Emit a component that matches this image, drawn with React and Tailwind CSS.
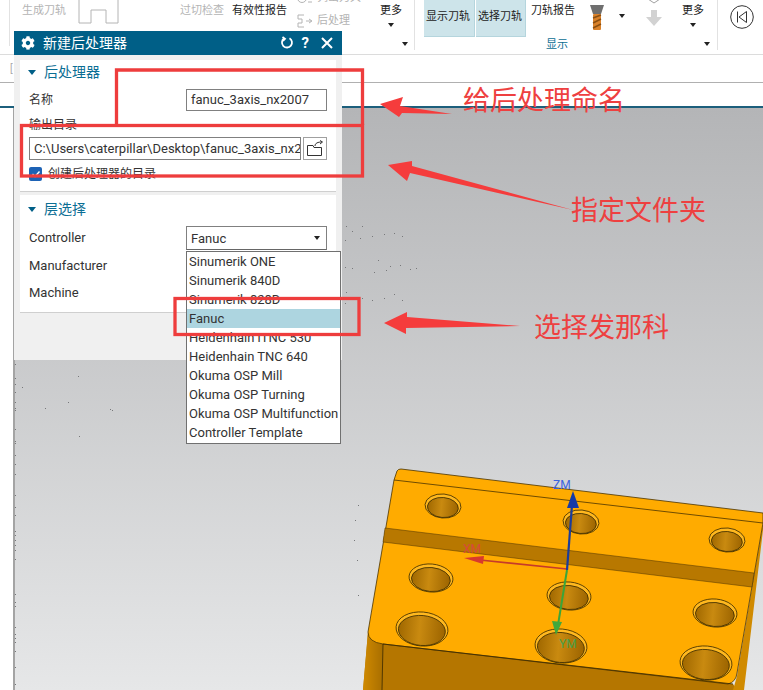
import React from "react";
import { FaCog } from "react-icons/fa";

const UI = "font-['Roboto','Noto_Sans_CJK_SC',sans-serif]";

const holes = [
  [443, 506, 18, 12], [581, 522, 18, 12], [727, 540, 18, 12],
  [431, 578, 22, 14], [569, 596, 22, 14], [715, 613, 22, 14],
  [422, 629, 26, 17], [561, 646, 26, 17], [706, 663, 26, 17],
];

const dots = [
  [346, 226], [352, 231], [362, 226], [372, 236], [384, 234], [394, 233], [402, 236], [345, 240], [360, 238],
  [345, 267], [352, 268], [378, 260], [390, 266], [400, 265], [410, 269], [416, 268], [374, 272], [386, 270],
  [346, 292], [362, 298], [372, 300], [384, 298], [394, 294], [402, 300], [345, 303],
  [15, 364], [15, 378], [15, 384], [15, 392], [22, 387], [15, 402], [15, 408], [45, 408], [15, 410], [15, 429],
  [15, 441], [15, 443], [15, 455], [15, 464], [15, 474], [15, 495], [15, 507], [15, 515], [15, 531], [15, 535],
  [15, 540], [15, 545], [15, 550], [15, 559], [15, 594], [15, 602], [15, 606], [15, 627], [15, 634], [15, 638],
  [15, 642], [15, 651], [15, 667], [15, 684], [78, 376], [112, 410], [110, 409], [68, 402], [79, 436],
  [358, 505], [355, 520], [354, 540], [357, 560], [358, 595],
];

const menu = [
  "Sinumerik ONE", "Sinumerik 840D", "Sinumerik 828D", "Fanuc", "Heidenhain iTNC 530",
  "Heidenhain TNC 640", "Okuma OSP Mill", "Okuma OSP Turning", "Okuma OSP Multifunction", "Controller Template",
];

function Caret({ className = "" }) {
  return <span className={`block w-0 h-0 border-x-[3.5px] border-x-transparent border-t-[4px] border-t-[#222] ${className}`} />;
}

function RibbonText({ children, muted, className = "" }) {
  return (
    <span className={`whitespace-nowrap text-[11px] leading-[14px] ${muted ? "text-[#b4b4b4]" : "text-[#222]"} ${className}`}>
      {children}
    </span>
  );
}

function Model() {
  return (
    <svg className="absolute left-0 top-0 pointer-events-none" width="763" height="690" viewBox="0 0 763 690">
      <defs>
        <linearGradient id="hole" x1="0" x2="1" y1="0" y2="0">
          <stop offset="0" stopColor="#a06800" />
          <stop offset="0.45" stopColor="#c98a10" />
          <stop offset="1" stopColor="#9c6400" />
        </linearGradient>
        <linearGradient id="side" x1="0" x2="1" y1="0" y2="0">
          <stop offset="0" stopColor="#d08a00" />
          <stop offset="1" stopColor="#a86e00" />
        </linearGradient>
      </defs>
      {dots.map(([x, y], i) => (
        <rect key={i} x={x} y={y} width="1" height="1" fill="#77787a" />
      ))}
      <polygon points="368,632 383,644 733,684 737,690 363,690" fill="#b57600" />
      <polygon points="368,632 383,644 382,690 363,690" fill="url(#side)" />
      <polygon points="763,523 763,530 744,690 733,690 737,676" fill="#d08a00" />
      <path
        d="M394,480 L397,471 Q398,469 401,469 L763,513 L763,523 L737,673 Q736,682 728,684 L383,644 Q368,642 368,632 Z"
        fill="#ffab00"
        stroke="#4a3300"
        strokeWidth="0.8"
      />
      <path d="M394,480 L763,523" stroke="#4a3300" strokeWidth="0.8" fill="none" />
      <polygon points="385,528 754,573 752,587 383,542" fill="#b87800" stroke="#4a3300" strokeWidth="0.5" />
      <path d="M383,644 L382,690" stroke="#3a2a00" strokeWidth="0.8" />
      <path d="M383,644 L733,684" stroke="#3a2a00" strokeWidth="0.8" />
      {holes.map(([x, y, rx, ry], i) => (
        <g key={i} transform={`rotate(5 ${x} ${y})`}>
          <ellipse cx={x} cy={y} rx={rx} ry={ry} fill="#ffb81f" stroke="#3a2a00" strokeWidth="0.8" />
          <ellipse cx={x} cy={y + 1.5} rx={rx - 2.5} ry={ry - 2} fill="url(#hole)" stroke="#3a2a00" strokeWidth="0.8" />
        </g>
      ))}
      <line x1="567" y1="569" x2="480" y2="560" stroke="#c63a2a" strokeWidth="1.6" />
      <polygon points="464,558 484,556 483,564" fill="#d8392e" />
      <line x1="567" y1="570" x2="558" y2="625" stroke="#3aa53a" strokeWidth="2" />
      <polygon points="556,635 552,621 562,622" fill="#3fa83c" />
      <line x1="567" y1="570" x2="572" y2="505" stroke="#1a3c9c" strokeWidth="2.2" />
      <polygon points="573,491 567,508 579,508" fill="#153aa8" />
      <text x="553" y="489" fontSize="12" fill="#3b63e0" fontFamily="Roboto">ZM</text>
      <text x="463" y="553" fontSize="12" fill="#d84a3c" fontFamily="Roboto">XM</text>
      <text x="559" y="648" fontSize="12" fill="#4aa04a" fontFamily="Roboto">YM</text>
    </svg>
  );
}

function Annotations() {
  return (
    <svg className="absolute left-0 top-0 pointer-events-none" width="763" height="690" viewBox="0 0 763 690">
      <g fill="none" stroke="#ee3d3d" strokeWidth="3.3">
        <path d="M116.5,124 V70 H362.5 V125" />
        <rect x="21.5" y="125.5" width="341" height="50.5" />
        <rect x="175" y="298.5" width="184" height="36" />
      </g>
      <g fill="#f53c3c">
        <polygon points="380,104 403,97 400,106 452,114 402,113 399,117" />
        <polygon points="388,165 412,161 412,166 573,210 410,173 407,181" />
        <polygon points="384,323 407,312 407,317 520,326 406,328 406,334" />
      </g>
    </svg>
  );
}

function Row({ label, children, className = "" }) {
  return (
    <div className={`flex items-center pl-[9px] ${className}`}>
      <span className="w-[157px] text-[13px] text-[#333]">{label}</span>
      {children}
    </div>
  );
}

function SectionTitle({ children }) {
  return (
    <div className="h-[24px] flex items-center pl-[8px] gap-[8px] text-[14px] text-[#0b6e94]">
      <span className="block w-0 h-0 border-x-[4.5px] border-x-transparent border-t-[5px] border-t-[#005f87]" />
      {children}
    </div>
  );
}

function Dialog() {
  return (
    <div className="absolute left-[14px] top-[31px] w-[328px] h-[329px] bg-[#f0f0f0] flex flex-col">
      <div className="h-[24px] bg-[#005f87] flex items-center pl-[7px] text-white">
        <FaCog className="w-[14px] h-[14px]" />
        <span className="ml-[8px] text-[14px]">新建后处理器</span>
        <svg className="ml-auto" width="14" height="14" viewBox="0 0 14 14" fill="none" stroke="white" strokeWidth="1.8">
          <path d="M9.5,2.2 A5,5 0 1 1 4,2.5" />
          <path d="M2.5,1 L5,2.8 L3,5" />
        </svg>
        <span className="ml-[8px] text-[15px] font-bold leading-none">?</span>
        <svg className="ml-[12px] mr-[9px]" width="12" height="12" viewBox="0 0 12 12" stroke="white" strokeWidth="2">
          <path d="M1,1 L11,11 M11,1 L1,11" />
        </svg>
      </div>
      <div className="mt-[5px] mx-[6px] w-[316px] h-[132px] bg-white border-b border-[#cfcfcf] flex flex-col">
        <SectionTitle>后处理器</SectionTitle>
        <div className="flex items-center pl-[9px] mt-[5px]">
          <span className="w-[157px] text-[12px] text-[#333]">名称</span>
          <div className="w-[141px] h-[22px] border border-[#808080] pl-[4px] flex items-center text-[13px] text-[#333]">fanuc_3axis_nx2007</div>
        </div>
        <div className="pl-[9px] mt-[5px] h-[18px] leading-[18px] text-[12px] text-[#333]">输出目录</div>
        <div className="flex pl-[9px] mt-[3px] gap-[2px]">
          <div className="w-[272px] h-[23px] border border-[#808080] pl-[4px] flex items-center overflow-hidden whitespace-nowrap text-[13px] text-[#333]">
            C:\Users\caterpillar\Desktop\fanuc_3axis_nx2007
          </div>
          <div className="w-[24px] h-[23px] border border-[#a0a0a0] flex items-center justify-center">
            <svg width="18" height="17" viewBox="0 0 18 17" fill="none" stroke="#333" strokeWidth="1">
              <path d="M1.5,5.5 H7 L8,7.5 H15.5 V15.5 H1.5 Z" />
              <path d="M9,6 C9,3 12,2 16,2 M14,0.5 L16.5,2 L14,4" />
            </svg>
          </div>
        </div>
        <div className="flex items-center pl-[9px] mt-[7px] gap-[6px]">
          <span className="w-[13px] h-[14px] rounded-[2px] bg-[#1d62b5] flex items-center justify-center">
            <svg width="10" height="10" viewBox="0 0 10 10" fill="none" stroke="white" strokeWidth="1.4">
              <path d="M1.5,5 L4,7.5 L8.5,2.5" />
            </svg>
          </span>
          <span className="text-[12px] leading-[14px] text-[#333]">创建后处理器的目录</span>
        </div>
      </div>
      <div className="mt-[3px] mx-[6px] w-[316px] h-[118px] bg-white border-b border-[#cfcfcf] flex flex-col pt-[2px]">
        <SectionTitle>层选择</SectionTitle>
        <Row label="Controller" className="mt-[5px]">
          <div className="relative w-[141px] h-[24px] border border-[#808080] border-b-[#666] pl-[4px] pt-[1px] flex items-center text-[13px] text-[#333]">
            Fanuc
            <Caret className="absolute right-[6px] top-[9px]" />
            <div className="absolute left-[-1px] top-[24px] w-[155px] bg-white border border-[#707070] pb-[1px] text-[13px] leading-[19px] text-[#333]">
              {menu.map((m) => (
                <div key={m} className={`h-[19px] pl-[2px] whitespace-nowrap ${m === "Fanuc" ? "bg-[#add5e0]" : ""}`}>{m}</div>
              ))}
            </div>
          </div>
        </Row>
        <Row label="Manufacturer" className="h-[27px] mt-[2px]" />
        <Row label="Machine" className="h-[27px]" />
      </div>
    </div>
  );
}

function Ribbon() {
  return (
    <div className="h-[55px] shrink-0 border-b border-[#dcdcdc] flex">
      <div className="relative w-[415px] h-[50px] border-r border-[#e2e2e2] flex items-start">
        <span className="w-[10px] h-[46px] border-r border-[#e2e2e2]" />
        <RibbonText muted className="ml-[12px] mt-[4px]">生成刀轨</RibbonText>
        <svg className="ml-[12px] shrink-0" width="42" height="24" viewBox="0 0 42 24" fill="none" stroke="#b4b4b4">
          <path d="M1,0 V23 H13 V10 H28 V23 H40 V0" />
        </svg>
        <RibbonText muted className="ml-[60px] mt-[4px]">过切检查</RibbonText>
        <RibbonText className="ml-[8px] mt-[4px]">有效性报告</RibbonText>
        <div className="ml-[10px] flex flex-col shrink-0">
          <div className="flex items-center gap-[4px] -mt-[9px]">
            <svg width="16" height="14" viewBox="0 0 16 14" fill="none" stroke="#b4b4b4">
              <circle cx="5" cy="7" r="4.5" />
              <path d="M11,3 H15 M11,7 H15 M11,11 H15" />
            </svg>
            <RibbonText muted>列出刀具</RibbonText>
          </div>
          <div className="flex items-center mt-[9px] gap-[4px]">
            <svg width="16" height="14" viewBox="0 0 16 14" fill="none" stroke="#b4b4b4">
              <path d="M7,1 H1 V5 H5 V9 H1 V13 H7 M9,7 H14 M12,5 L15,7 L12,9" />
            </svg>
            <RibbonText muted>后处理</RibbonText>
          </div>
        </div>
        <div className="ml-[19px] mt-[4px] flex flex-col items-center w-[22px] shrink-0">
          <RibbonText>更多</RibbonText>
          <Caret className="mt-[5px]" />
        </div>
        <Caret className="absolute right-[6px] top-[42px]" />
      </div>
      <div className="relative w-[303px] h-[50px] border-r border-[#e2e2e2] flex items-start">
        <div className="ml-[9px] flex gap-[1px]">
          <div className="w-[51px] h-[37px] bg-[#cde4ea] border-r border-b border-[#b5d5dd] pl-[2px] pt-[3px]"><RibbonText>显示刀轨</RibbonText></div>
          <div className="w-[50px] h-[37px] bg-[#cde4ea] border-b border-r border-[#b5d5dd] pl-[2px] pt-[3px]"><RibbonText>选择刀轨</RibbonText></div>
        </div>
        <RibbonText className="ml-[5px] mt-[4px]">刀轨报告</RibbonText>
        <svg className="ml-[13px] mt-[4px] shrink-0" width="18" height="26" viewBox="0 0 18 26">
          <polygon points="2,1 16,1 13,10 5,10" fill="#6f6f6f" />
          <rect x="5" y="10" width="8" height="16" rx="1" fill="#d9822b" />
          <path d="M5,14 L13,11 M5,19 L13,15 M5,24 L13,20" stroke="#8a4f12" strokeWidth="1.4" />
        </svg>
        <Caret className="ml-[13px] mt-[14px]" />
        <div className="ml-[20px] flex flex-col items-center shrink-0 w-[18px]">
          <svg className="-mt-[1px]" width="14" height="5" viewBox="0 0 14 5" fill="none" stroke="#a0a0a0"><path d="M1,0 L7,4 L13,0" /></svg>
          <svg className="mt-[6px]" width="16" height="16" viewBox="0 0 16 16"><polygon points="5,0 11,0 11,7 16,7 8,16 0,7 5,7" fill="#d2d2d2" /></svg>
        </div>
        <div className="ml-[19px] mt-[4px] flex flex-col items-center w-[22px] shrink-0">
          <RibbonText>更多</RibbonText>
          <Caret className="mt-[5px]" />
        </div>
        <span className="absolute left-[131px] top-[37px] text-[11px] leading-[15px] text-[#0b6e94]">显示</span>
        <Caret className="absolute right-[7px] top-[42px]" />
      </div>
      <svg className="ml-[12px] mt-[5px]" width="24" height="24" viewBox="0 0 24 24" fill="none" stroke="#333" strokeWidth="1">
        <circle cx="12" cy="12" r="11.3" />
        <path d="M7.5,6.5 V17.5 M16.5,6.5 L9,12 L16.5,17.5 Z" />
      </svg>
    </div>
  );
}

export default function App() {
  return (
    <div className={`relative w-[763px] h-[690px] overflow-hidden bg-white flex flex-col ${UI}`}>
      <Ribbon />
      <div className="h-[28px] shrink-0 border-b border-[#b0b0b0] flex items-center pl-[10px]">
        <span className="text-[10px] text-[#aaa] leading-none">[</span>
      </div>
      <div className="h-[25px] shrink-0 border-b-2 border-[#1c5f7c]" />
      <div className="flex-1 ml-[13px] border-l-2 border-[#a4a4a4] bg-gradient-to-b from-[#b4b5b7] to-[#e6e7e8]" />
      <Model />
      <Dialog />
      <Annotations />
      <span className="absolute left-[463px] top-[79px] text-[27px] leading-[40px] text-[#ee4040] font-['Noto_Sans_CJK_SC',sans-serif] whitespace-nowrap">给后处理命名</span>
      <span className="absolute left-[571px] top-[189px] text-[27px] leading-[40px] text-[#ee4040] font-['Noto_Sans_CJK_SC',sans-serif] whitespace-nowrap">指定文件夹</span>
      <span className="absolute left-[534px] top-[306px] text-[27px] leading-[40px] text-[#ee4040] font-['Noto_Sans_CJK_SC',sans-serif] whitespace-nowrap">选择发那科</span>
    </div>
  );
}
